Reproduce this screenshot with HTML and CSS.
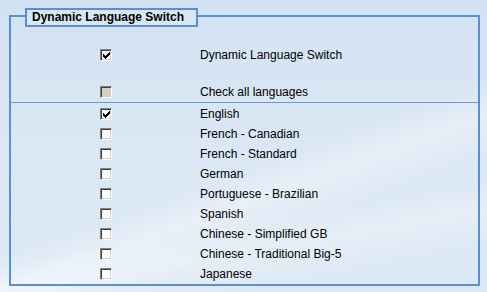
FILE: index.html
```html
<!DOCTYPE html>
<html>
<head>
<meta charset="utf-8">
<link rel="stylesheet" href="styles.css">
</head>
<body>
<div class="page">
  <div class="frame">
    <div class="legend">Dynamic Language Switch</div>
    <div class="top">
      <div class="row"><span class="cb checked"><svg viewBox="0 0 7 7" class="tick"><path d="M6 0h1v3h-1zM5 1h1v3h-1zM4 2h1v3h-1zM0 2h1v3h-1zM1 3h1v3h-1zM2 4h1v3h-1zM3 3h1v3h-1z" /></svg></span><span class="label">Dynamic Language Switch</span></div>
      <div class="row row2"><span class="cb disabled"></span><span class="label">Check all languages</span></div>
    </div>
    <div class="sep"></div>
    <div class="list">
      <div class="row"><span class="cb checked"><svg viewBox="0 0 7 7" class="tick"><path d="M6 0h1v3h-1zM5 1h1v3h-1zM4 2h1v3h-1zM0 2h1v3h-1zM1 3h1v3h-1zM2 4h1v3h-1zM3 3h1v3h-1z" /></svg></span><span class="label">English</span></div>
      <div class="row"><span class="cb"></span><span class="label">French - Canadian</span></div>
      <div class="row"><span class="cb"></span><span class="label">French - Standard</span></div>
      <div class="row"><span class="cb"></span><span class="label">German</span></div>
      <div class="row"><span class="cb"></span><span class="label">Portuguese - Brazilian</span></div>
      <div class="row"><span class="cb"></span><span class="label">Spanish</span></div>
      <div class="row"><span class="cb"></span><span class="label">Chinese - Simplified GB</span></div>
      <div class="row"><span class="cb"></span><span class="label">Chinese - Traditional Big-5</span></div>
      <div class="row"><span class="cb"></span><span class="label">Japanese</span></div>
    </div>
  </div>
</div>
</body>
</html>
```
FILE: styles.css
```css
html, body {
  margin: 0;
  padding: 0;
}
body {
  width: 487px;
  height: 292px;
  overflow: hidden;
  font-family: "Liberation Sans", Arial, sans-serif;
  font-size: 12px;
  color: #000;
  background:
    linear-gradient(160deg, rgba(255,255,255,0) 55%, rgba(255,255,255,0.35) 62%, rgba(255,255,255,0) 72%),
    linear-gradient(170deg, rgba(255,255,255,0) 70%, rgba(255,255,255,0.3) 78%, rgba(255,255,255,0) 88%),
    linear-gradient(180deg, #d3e2f2 0%, #dbe7f4 50%, #dde9f5 100%);
}
.page {
  padding: 15px 7px 0 9px;
}
.frame {
  position: relative;
  width: 467px;
  height: 267px;
  border: 2px solid #5a8fd3;
}
.legend {
  position: absolute;
  left: 14px;
  top: -9px;
  height: 15px;
  padding: 0 12px 0 5px;
  border: 2px solid #5a8fd3;
  background: #dae6f4;
  font-weight: bold;
  font-size: 12px;
  line-height: 15px;
}
.top {
  padding-top: 28px;
}
.row {
  display: grid;
  grid-template-columns: 89px 12px 88px 1fr;
  height: 20px;
  align-items: center;
}
.row2 {
  margin-top: 17px;
}
.cb {
  grid-column: 2;
  width: 12px;
  height: 12px;
  box-sizing: border-box;
  background: #fff;
  border-top: 1px solid #808080;
  border-left: 1px solid #808080;
  border-right: 1px solid #fff;
  border-bottom: 1px solid #fff;
  box-shadow: inset 1px 1px 0 #404040, inset -1px -1px 0 #d4d0c8;
  display: flex;
  align-items: center;
  justify-content: center;
}
.cb.disabled {
  background: #d4d0c8;
}
.tick {
  width: 7px;
  height: 7px;
  fill: #000;
  shape-rendering: crispEdges;
}
.label {
  grid-column: 4;
  white-space: nowrap;
}
.sep {
  height: 1px;
  background: #6a9bd6;
}
.list .row:first-child {
  margin-top: 1px;
}
```
